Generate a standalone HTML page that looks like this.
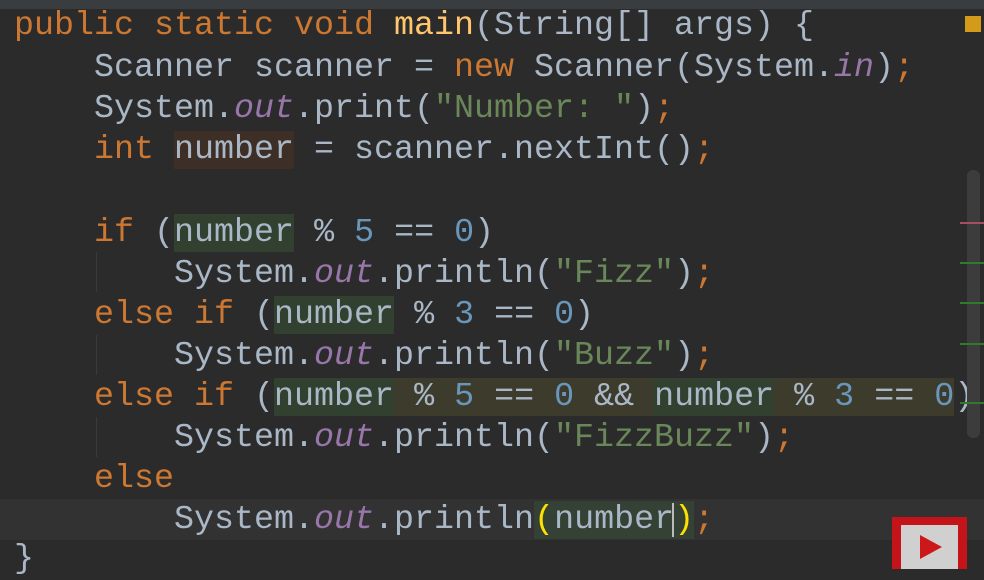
<!DOCTYPE html>
<html><head><style>
html,body{margin:0;padding:0}
body{width:984px;height:569px;background:#2b2b2b;overflow:hidden;position:relative;font-family:"Liberation Mono","DejaVu Sans Mono",monospace;font-size:33.33px;color:#a9b7c6}
.top{position:absolute;left:0;top:0;width:984px;height:9px;background:#3a3d3f}
.cur{position:absolute;left:0;top:499px;width:984px;height:41px;background:#323232}
.l{position:absolute;left:14px;height:41px;line-height:41px;white-space:pre}
.k{color:#cc7832}.f{color:#ffc66d}.s{color:#6a8759}.n{color:#6897bb}.o{color:#9876aa;font-style:italic}
.hb{background:#3e2f26}.hg{background:#31402f}.ho{background:#3c3b2c}
.y{color:#ffe000;background:#344134}
.g{position:absolute;width:1px;background:#3a3a3a}
</style></head><body>
<div class="top"></div>
<div class="cur"></div>
<div class="g" style="left:96px;top:252px;height:40px"></div>
<div class="g" style="left:96px;top:335px;height:40px"></div>
<div class="g" style="left:96px;top:417px;height:40px"></div>
<div class="l" style="top:6px"><span class="k">public static void </span><span class="f">main</span>(String[] args) {</div>
<div class="l" style="top:48px">    Scanner scanner = <span class="k">new </span>Scanner(System.<span class="o">in</span>)<span class="k">;</span></div>
<div class="l" style="top:89px">    System.<span class="o">out</span>.print(<span class="s">"Number: "</span>)<span class="k">;</span></div>
<div class="l" style="top:130px">    <span class="k">int </span><span class="hb">number</span> = scanner.nextInt()<span class="k">;</span></div>
<div class="l" style="top:213px">    <span class="k">if </span>(<span class="hg">number</span> % <span class="n">5</span> == <span class="n">0</span>)</div>
<div class="l" style="top:254px">        System.<span class="o">out</span>.println(<span class="s">"Fizz"</span>)<span class="k">;</span></div>
<div class="l" style="top:295px">    <span class="k">else if </span>(<span class="hg">number</span> % <span class="n">3</span> == <span class="n">0</span>)</div>
<div class="l" style="top:336px">        System.<span class="o">out</span>.println(<span class="s">"Buzz"</span>)<span class="k">;</span></div>
<div class="l" style="top:377px">    <span class="k">else if </span>(<span class="hg">number</span><span class="ho"> % <span class="n">5</span> == <span class="n">0</span> &amp;&amp; </span><span class="hg">number</span><span class="ho"> % <span class="n">3</span> == <span class="n">0</span></span>)</div>
<div class="l" style="top:418px">        System.<span class="o">out</span>.println(<span class="s">"FizzBuzz"</span>)<span class="k">;</span></div>
<div class="l" style="top:459px">    <span class="k">else</span></div>
<div class="l" style="top:500px">        System.<span class="o">out</span>.println<span class="y">(</span><span style="background:#344134">number</span><span class="y">)</span><span class="k">;</span></div>
<div class="l" style="top:539px">}</div>
<div style="position:absolute;left:672px;top:503px;width:2px;height:34px;background:#bbb"></div>
<div style="position:absolute;left:965px;top:16px;width:16px;height:16px;background:#d49b1a"></div>
<div style="position:absolute;left:967px;top:170px;width:13px;height:268px;border-radius:6px;background:#3c3c3c"></div>
<div style="position:absolute;left:960px;top:222px;width:24px;height:2px;background:#a05060"></div>
<div style="position:absolute;left:960px;top:262px;width:24px;height:2px;background:#2f7a2f"></div>
<div style="position:absolute;left:960px;top:302px;width:24px;height:2px;background:#2f7a2f"></div>
<div style="position:absolute;left:960px;top:343px;width:24px;height:2px;background:#2f7a2f"></div>
<div style="position:absolute;left:960px;top:402px;width:24px;height:2px;background:#2f7a2f"></div>
<div style="position:absolute;left:892px;top:517px;width:75px;height:52px;background:#c4141a"></div>
<div style="position:absolute;left:901px;top:525px;width:57px;height:44px;background:#d0d0d0"></div>
<svg style="position:absolute;left:918px;top:533px" width="26" height="28"><polygon points="2,2 24,14 2,26" fill="#cc1818"/></svg>
</body></html>
